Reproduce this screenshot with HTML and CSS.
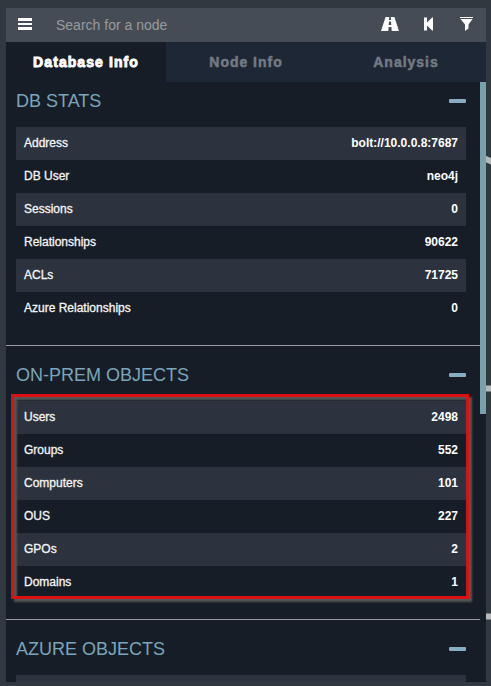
FILE: index.html
```
<!DOCTYPE html>
<html lang="en">
<head>
<meta charset="utf-8">
<title>Database Info</title>
<link rel="stylesheet" href="styles.css">
</head>
<body>
<svg class="edges" viewBox="0 0 491 686"><path d="M482 157.500L494 162.500M484 388.500H491M484 616.500H491"/></svg>
<main class="panel">
  <header class="search">
    <svg class="menu" viewBox="0 0 14 12"><path d="M0 0h14v3H0zM0 5h14v2H0zM0 9h14v3H0z"/></svg>
    <span class="placeholder">Search for a node</span>
    <svg class="road" viewBox="0 0 18 14"><path fill-rule="evenodd" d="M4.600 0H8.200L8 3H10L9.800 0H13.400L18 14H10.700L10.400 10H7.600L7.300 14H0zM8 4.500L7.700 8H10.300L10 4.500z"/></svg>
    <svg class="back" viewBox="0 0 9 14"><path d="M0 .5h3v5L8.200 .5H9v13H8.200L3 8.500v5H0z"/></svg>
    <svg class="filter" viewBox="0 0 13 14"><path d="M0 0h13v1H0zM.5 2h12L8.500 7.500v4L5 14V7.500z"/></svg>
  </header>
  <nav class="tabs">
    <span class="tab active">Database Info</span>
    <span class="tab">Node Info</span>
    <span class="tab">Analysis</span>
  </nav>
  <div class="body">
    <div class="content">
      <section>
        <h4>DB STATS<i></i></h4>
        <dl>
          <div><dt>Address</dt><dd>bolt://10.0.0.8:7687</dd></div>
          <div><dt>DB User</dt><dd>neo4j</dd></div>
          <div><dt>Sessions</dt><dd>0</dd></div>
          <div><dt>Relationships</dt><dd>90622</dd></div>
          <div><dt>ACLs</dt><dd>71725</dd></div>
          <div><dt>Azure Relationships</dt><dd>0</dd></div>
        </dl>
      </section>
      <section>
        <h4>ON-PREM OBJECTS<i></i></h4>
        <dl class="marked">
          <div><dt>Users</dt><dd>2498</dd></div>
          <div><dt>Groups</dt><dd>552</dd></div>
          <div><dt>Computers</dt><dd>101</dd></div>
          <div><dt>OUS</dt><dd>227</dd></div>
          <div><dt>GPOs</dt><dd>2</dd></div>
          <div><dt>Domains</dt><dd>1</dd></div>
        </dl>
      </section>
      <section>
        <h4>AZURE OBJECTS<i></i></h4>
        <dl><div></div></dl>
      </section>
    </div>
    <div class="scroll"><div class="thumb"></div></div>
  </div>
</main>
</body>
</html>
```
FILE: styles.css
```
* { box-sizing: border-box; }
body {
  margin: 0;
  height: 686px;
  padding: 8px 5px 4px 6px;
  overflow: hidden;
  background: #31383f;
  font-family: "Liberation Sans", Arial, sans-serif;
}
.edges { position: absolute; left: 0; top: 0; width: 491px; height: 686px; }
.edges path { stroke: #b9b9bb; stroke-width: 6; }
.panel {
  position: relative;
  display: flex;
  flex-direction: column;
  height: 674px;
  background: #161d27;
}
.search {
  display: flex;
  align-items: center;
  height: 34px;
  flex: none;
  padding: 0 13px 0 12px;
  background: #464c55;
}
.search svg { fill: #fff; flex: none; }
.menu { width: 14px; height: 12px; margin-top: -2px; }
.placeholder { flex: 1; margin-left: 24px; font-size: 14px; color: #989a9d; }
.road { width: 18px; height: 14px; margin-top: -2px; }
.back { width: 9px; height: 14px; margin: -2px 27px 0 25px; }
.filter { width: 13px; height: 14px; margin-top: -2px; }
.tabs { display: flex; height: 40px; flex: none; background: #1e2735; }
.tab {
  width: 160px;
  line-height: 40px;
  text-align: center;
  font-size: 14px;
  font-weight: bold;
  letter-spacing: .98px;
  color: #747a84;
  -webkit-text-stroke: .5px currentColor;
}
.active { background: #161d27; color: #fff; letter-spacing: 1.08px; -webkit-text-stroke-width: .9px; }
.body { display: flex; flex: 1; min-height: 0; overflow: hidden; }
.content { width: 474px; }
.scroll { width: 6px; }
.thumb { height: 332px; background: #76a3a9; }
section { height: 274px; padding: 10px 14px 0 10px; }
section:first-child { height: 264px; padding-top: 0; }
section:not(:last-child) { border-bottom: 1px solid #9599a0; }
h4 {
  display: flex;
  justify-content: space-between;
  align-items: center;
  height: 38px;
  margin: 0 0 7px;
  font-size: 18px;
  font-weight: normal;
  color: #7ba5ba;
}
h4 i { width: 17px; height: 4px; border-radius: 1px; background: #86adc2; }
dl { margin: 0; }
dl div {
  display: flex;
  justify-content: space-between;
  height: 33px;
  padding: 0 8px;
  line-height: 32px;
  font-size: 12px;
  color: #f4f5f6;
}
dl div:nth-child(odd) { background: #2c333e; }
dt { -webkit-text-stroke: .3px currentColor; }
dd { margin: 0; font-weight: bold; color: #fff; }
.marked { position: relative; }
.marked::after {
  content: "";
  box-sizing: border-box;
  position: absolute;
  left: -5px;
  top: -7px;
  width: 458px;
  height: 205px;
  border: 3px solid #dc1013;
  box-shadow: 3px 3px 2px #555655, inset 3px 3px 2px #555655;
}
```
